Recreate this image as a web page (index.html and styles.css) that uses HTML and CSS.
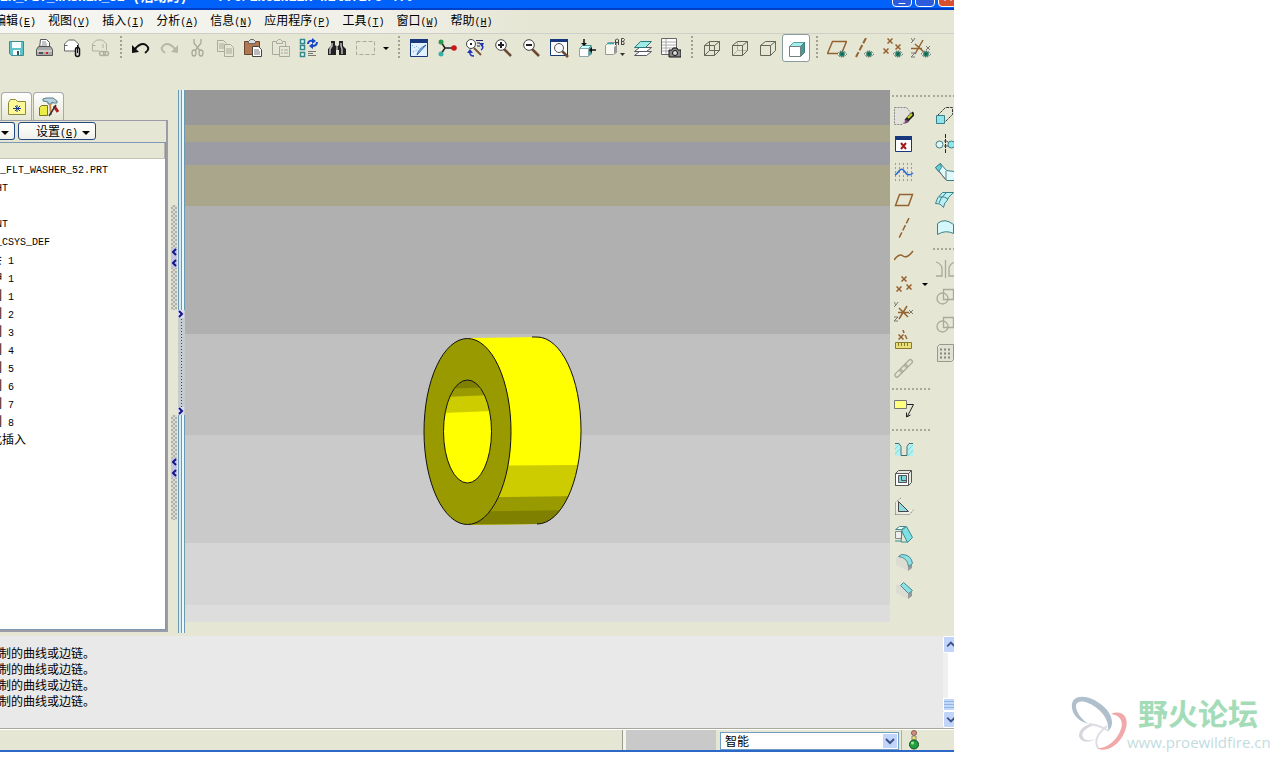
FILE: index.html
```
<!DOCTYPE html>
<html lang="zh-CN">

<head>
    <meta charset="UTF-8">
    <meta name="viewport" content="width=device-width, initial-scale=1.0">
    <title>Pro/ENGINEER Wildfire 4.0</title>
    <link rel="stylesheet" href="styles.css">
</head>

<body>
    <!-- Shapes used by more than one icon -->
    <svg class="defs" aria-hidden="true">
        <symbol id="eye" viewBox="0 0 10 8">
            <path d="M0 4Q5-2 10 4Q5 10 0 4z" fill="#dfe8dc" stroke="#444" stroke-width="1" stroke-dasharray="1 1" />
            <circle cx="5" cy="4" r="2.800" fill="#267a68" />
            <circle cx="5" cy="4" r="1" fill="#063" />
        </symbol>
        <symbol id="cross" viewBox="0 0 6 6">
            <path d="M.5.5l5 5M5.500.5l-5 5" stroke="#96602e" stroke-width="1.500" />
        </symbol>
        <symbol id="lens" viewBox="0 0 20 20">
            <path d="M11 11l7 7" stroke="#6b4a35" stroke-width="2.500" />
            <circle cx="8" cy="7" r="5.300" fill="#fff" stroke="#444" />
        </symbol>
    </svg>

    <div class="app">
        <div class="title-bar">
            <span class="title-text">ER_FLT_WASHER_52 (活动的)&nbsp; - Pro/ENGINEER Wildfire 4.0</span>
            <div class="window-buttons">
                <button class="win-btn" aria-label="最小化">_</button>
                <button class="win-btn" aria-label="最大化">▫</button>
                <button class="win-btn close" aria-label="关闭">×</button>
            </div>
        </div>

        <nav class="menu-bar">
            <button>编辑<span>(<u>E</u>)</span></button>
            <button>视图<span>(<u>V</u>)</span></button>
            <button>插入<span>(<u>I</u>)</span></button>
            <button>分析<span>(<u>A</u>)</span></button>
            <button>信息<span>(<u>N</u>)</span></button>
            <button>应用程序<span>(<u>P</u>)</span></button>
            <button>工具<span>(<u>T</u>)</span></button>
            <button>窗口<span>(<u>W</u>)</span></button>
            <button>帮助<span>(<u>H</u>)</span></button>
        </nav>

        <div class="toolbar">
            <button class="tool" aria-label="保存"><svg viewBox="0 0 20 20">
                    <path d="M3.500 3.500h14v14h-12l-2-2z" fill="#5cc4c8" stroke="#3d8c92" />
                    <path d="M6 4h9v6H6z" fill="#f4ffff" />
                    <path d="M7 12h7v5H7z" fill="#fff" />
                    <path d="M11 13h2v4h-2z" fill="#356" />
                </svg></button>
            <button class="tool" aria-label="打印"><svg viewBox="0 0 20 20">
                    <path d="M5.500 10l1-8.500h6l3 3V10" fill="#fff" stroke="#555" />
                    <path d="M8 4h4M8 6h5M7 8h6" stroke="#888" />
                    <path d="M2.500 11.500l2-3h12l2 3v6h-16z" fill="#aaa" stroke="#555" />
                    <path d="M3 13h15" stroke="#eee" />
                    <path d="M5 15h4" stroke="#555" stroke-width="2" />
                    <path d="M12 15h2" stroke="#c22" stroke-width="2" />
                </svg></button>
            <button class="tool" aria-label="发送"><svg viewBox="0 0 20 20">
                    <path d="M2.500 11V6l4-4h6l4 4v7h-14zM2.500 7.500h3" fill="#fff" stroke="#666" />
                    <rect x="13.500" y="9.500" width="4" height="9" rx="2" fill="#ddd" stroke="#111" stroke-width="1.500" />
                    <path d="M15.500 7v8" stroke="#111" />
                </svg></button>
            <button class="tool" aria-label="发送链接"><svg viewBox="0 0 20 20" fill="none" stroke="#b0b0a0">
                    <path d="M2.500 13V6l4-4h6l4 4v6M2.500 7.500h3M2.500 13h7M13 6v4" />
                    <rect x="9.500" y="13.500" width="6" height="4" rx="2" stroke-width="1.500" />
                    <rect x="13.500" y="13.500" width="5" height="4" rx="2" stroke-width="1.500" />
                </svg></button>
            <span class="sep"></span>
            <button class="tool" aria-label="撤消"><svg viewBox="0 0 20 20">
                    <path d="M1 7v8l7-1z" fill="#111" />
                    <path d="M4 11Q10 4 15 7Q20 11 14 15" fill="none" stroke="#111" stroke-width="2" />
                </svg></button>
            <button class="tool" aria-label="重做"><svg viewBox="0 0 20 20">
                    <path d="M19 7v8l-7-1z" fill="#b8b8a8" />
                    <path d="M16 11Q10 4 5 7Q0 11 6 15" fill="none" stroke="#b8b8a8" stroke-width="2" />
                </svg></button>
            <button class="tool" aria-label="剪切"><svg viewBox="0 0 20 20" fill="none" stroke="#aaaa9a" stroke-width="1.300">
                    <path d="M7 1v4l6 8M14 1v4l-6 8" />
                    <ellipse cx="7" cy="15" rx="2" ry="3" />
                    <ellipse cx="14" cy="15" rx="2" ry="3" />
                </svg></button>
            <button class="tool" aria-label="复制"><svg viewBox="0 0 20 20" fill="#e6e6d6" stroke="#aaaa9a">
                    <path d="M2.500 2.500h6l3 3v8h-9zM4 6h5M4 8h5M4 10h5" />
                    <path d="M9.500 6.500h6l3 3v9h-9zM11 11h6M11 13h6M11 15h6" />
                </svg></button>
            <button class="tool" aria-label="粘贴"><svg viewBox="0 0 20 20">
                    <path d="M1.500 3.500h15v13h-15z" fill="#b27650" stroke="#6a4630" />
                    <path d="M5.500 5.500v-2l2-2h3l2 2v2z" fill="#ddd" stroke="#666" />
                    <path d="M9.500 8.500h6l3 3v7h-9z" fill="#fff" stroke="#444" />
                    <path d="M11 12h5M11 14h6M11 16h6" stroke="#777" />
                </svg></button>
            <button class="tool" aria-label="选择性粘贴"><svg viewBox="0 0 20 20" fill="#e6e6d6" stroke="#aaaa9a">
                    <path d="M1.500 3.500h13v13h-13z" />
                    <path d="M5.500 5.500v-2l2-2h2l2 2v2z" />
                    <path d="M8.500 8.500h10v10h-10zM10 12h2M10 15h2M13 12h4M13 15h4" />
                </svg></button>
            <button class="tool" aria-label="再生"><svg viewBox="0 0 20 20">
                    <path d="M1.500 1.500h4v4h-4zM1.500 7.500h4v4h-4zM1.500 14.500h4v4h-4z" fill="#eaffff" stroke="#33868a" stroke-width="1.500" />
                    <path d="M9 6q0-4 5-3M18 4q0 4-5 4" fill="none" stroke="#1746c8" stroke-width="2" />
                    <path d="M13 0l4 3-4 3zM14 5l-4 3 4 3z" fill="#1746c8" />
                    <path d="M9 13.500h8M9 15.500h5M9 17.500h8" stroke="#777" />
                </svg></button>
            <button class="tool" aria-label="查找"><svg viewBox="0 0 20 20">
                    <path d="M4 3h4v4l2 2 2-2V3h4v5l3 3v6h-7v-5H9v5H1v-6l3-3z" fill="#222" />
                    <path d="M5 5v3l-2 3v5M14 5v3l1 3v5M10 9v3" fill="none" stroke="#bbb" stroke-width="1.500" />
                </svg></button>
            <button class="tool" aria-label="选取框"><svg viewBox="0 0 20 20">
                    <path d="M1.500 3.500h18v13h-18z" fill="none" stroke="#aaaa9a" stroke-dasharray="4 2" />
                </svg></button>
            <button class="drop" aria-label="选取选项"></button>
            <span class="sep"></span>
            <button class="tool" aria-label="重画"><svg viewBox="0 0 20 20">
                    <path d="M1.500 1.500h17v17h-17z" fill="#e2f0ff" stroke="#17387c" />
                    <path d="M1 1h18v4H1z" fill="#17387c" />
                    <path d="M3 7l3 3M4 14l4-2M7 8l4 3" stroke="#5a9ad8" stroke-dasharray="1 2" />
                    <path d="M17 7L8 17q1-6 9-10" fill="#a6c8ec" stroke="#2a6aa8" />
                </svg></button>
            <button class="tool" aria-label="旋转中心"><svg viewBox="0 0 20 20">
                    <path d="M4 4l4 6M8 10l-4 6M8 10h9" stroke="#222" stroke-width="1.500" />
                    <circle cx="4" cy="4" r="2.500" fill="#2a9a4c" />
                    <circle cx="4" cy="16" r="2.500" fill="#35b0a8" />
                    <circle cx="17" cy="10" r="2.800" fill="#c81818" />
                </svg></button>
            <button class="tool" aria-label="定向模式"><svg viewBox="0 0 20 20">
                    <path d="M9 10l7 7" stroke="#7a5238" stroke-width="2" />
                    <circle cx="6" cy="6" r="4.500" fill="#fff" stroke="#444" />
                    <path d="M6 5v2" stroke="#222" stroke-width="2" />
                    <path d="M11 2.500h7M12 5h3M12 8h3" stroke="#226" />
                    <path d="M17 7q2 3-1 5M5 13q-1 5 4 5" fill="none" stroke="#2235b8" stroke-width="1.500" />
                    <path d="M2 15l3-4 3 4zM14 5h5l-2 4z" fill="#2235b8" />
                </svg></button>
            <button class="tool" aria-label="放大"><svg viewBox="0 0 20 20">
                    <use href="#lens" />
                    <path d="M5 7h6M8 4v6" stroke="#222" stroke-width="2" />
                </svg></button>
            <button class="tool" aria-label="缩小"><svg viewBox="0 0 20 20">
                    <use href="#lens" />
                    <path d="M5 7h6" stroke="#222" stroke-width="2" />
                </svg></button>
            <button class="tool" aria-label="重新调整"><svg viewBox="0 0 20 20">
                    <path d="M1.500 1.500h17v16h-17z" fill="#fff" stroke="#17387c" />
                    <path d="M1 1h18v3H1z" fill="#17387c" />
                    <path d="M13 13l6 6" stroke="#6b4a35" stroke-width="2.500" />
                    <circle cx="10" cy="10" r="4.500" fill="#f8f8f8" stroke="#555" />
                </svg></button>
            <button class="tool" aria-label="重定向"><svg viewBox="0 0 20 20">
                    <path d="M2.500 10.500l3-3h9l-3 3z" fill="#cff" stroke="#4a9a9a" />
                    <path d="M2.500 10.500h9v8h-9z" fill="#fff" stroke="#8aa" />
                    <path d="M12 10l3-2v8l-3 2z" fill="#48a0a0" />
                    <path d="M7 1v6M19 12h-6" stroke="#111" stroke-width="1.500" />
                    <path d="M4 5h6l-3 3zM15 9v6l-3-3z" fill="#111" />
                </svg></button>
            <button class="tool" aria-label="已命名视图"><svg viewBox="0 0 20 20">
                    <path d="M.5 7.500l3-3h8v10l-3 2h-8z" fill="#f8f8f0" stroke="#999" />
                    <path d="M2 5.500h7" stroke="#3aa" stroke-width="1.500" />
                    <path d="M9 9l3-2v7l-3 2z" fill="#999" />
                    <path d="M10.500 7V2l1-1h1l1 1v5M10.500 4.500h3M16.500 7V.5h2l1 1-1 2h-2M18 3.500l1 1v2h-3" fill="none" stroke="#444" />
                    <path d="M15 15h5l-2.500 3z" fill="#333" />
                </svg></button>
            <button class="tool" aria-label="层"><svg viewBox="0 0 20 20" stroke="#556">
                    <path d="M1.500 17.500l5-4h12l-5 4z" fill="#fff" />
                    <path d="M1.500 13.500l5-4h12l-5 4z" fill="#fff" />
                    <path d="M1.500 9.500l6-6h11l-6 6z" fill="#9eeae6" stroke="#2a7a7a" />
                </svg></button>
            <button class="tool" aria-label="视图管理器"><svg viewBox="0 0 20 20">
                    <path d="M.5.5h15v16H.5z" fill="#fff" stroke="#666" />
                    <path d="M1 4h14M1 7h14M1 10h14M1 13h8M5 1v15" stroke="#aaa" />
                    <path d="M8 12h3l1-2h4l1 2h3v7H8z" fill="#888" stroke="#111" />
                    <circle cx="14" cy="15" r="2.500" fill="#ddd" stroke="#111" />
                </svg></button>
            <span class="sep"></span>
            <button class="tool" aria-label="线框"><svg viewBox="0 0 20 20" fill="none" stroke="#666658">
                    <path d="M2.500 7.500h10v10h-10zM7.500 3.500h10v9h-10zM2.500 7.500l5-4M12.500 7.500l5-4M12.500 17.500l5-5M2.500 17.500l5-5" />
                </svg></button>
            <button class="tool" aria-label="隐藏线"><svg viewBox="0 0 20 20" fill="none" stroke="#666658">
                    <path d="M7.500 4v8.500h10M2.500 17.500l5-5" stroke="#b4b4a6" />
                    <path d="M2.500 7.500h10v10h-10zM2.500 7.500l5-4h10v9l-5 5M12.500 7.500l5-4" />
                </svg></button>
            <button class="tool" aria-label="消隐"><svg viewBox="0 0 20 20" fill="none" stroke="#666658">
                    <path d="M2.500 7.500h10v10h-10zM2.500 7.500l5-4h10v9l-5 5M12.500 7.500l5-4" />
                </svg></button>
            <button class="tool active" aria-label="着色"><svg viewBox="0 0 20 20">
                    <path d="M3.500 8.500l4-4h11l-4 4z" fill="#a5efeb" stroke="#55a09e" />
                    <path d="M14.500 8.500l4-4v10l-4 4z" fill="#499995" stroke="#417e7c" />
                    <path d="M3.500 8.500h11v10h-11z" fill="#fff" stroke="#718080" />
                </svg></button>
            <span class="sep"></span>
            <button class="tool" aria-label="基准平面开/关"><svg viewBox="0 0 20 20">
                    <path d="M5.500 3.500h14l-5 12H.5z" fill="none" stroke="#936431" stroke-width="1.500" />
                    <use href="#eye" x="10" y="12" width="10" height="8" />
                </svg></button>
            <button class="tool" aria-label="基准轴开/关"><svg viewBox="0 0 20 20">
                    <path d="M11 0L1 19" stroke="#936431" stroke-width="2" stroke-dasharray="6 2" />
                    <use href="#eye" x="9" y="12" width="10" height="8" />
                </svg></button>
            <button class="tool" aria-label="基准点开/关"><svg viewBox="0 0 20 20">
                    <use href="#cross" x="4" y="0" width="6" height="6" />
                    <use href="#cross" x="12" y="6" width="6" height="6" />
                    <use href="#cross" x="0" y="10" width="6" height="6" />
                    <use href="#eye" x="10" y="12" width="10" height="8" />
                </svg></button>
            <button class="tool" aria-label="坐标系开/关"><svg viewBox="0 0 20 20">
                    <path d="M0 10.500h11M4 6l10 9M12 2L4 16" stroke="#936431" stroke-width="1.500" />
                    <path d="M0 0l2 3 2-3M2 3L0 5M0 15h4l-4 4h4M15 8l4 4M19 8l-4 4" fill="none" stroke="#777" />
                    <use href="#eye" x="10" y="12" width="10" height="8" />
                </svg></button>
        </div>

        <div class="workspace">
            <aside class="navigator">
                <div class="tabs">
                    <button class="tab" aria-label="文件夹浏览器"><svg viewBox="0 0 20 20">
                            <path d="M1.500 5.500l2-3h5l2 2h8v13h-17z" fill="#fdf998" stroke="#8a8a3a" />
                            <path d="M10 8v7M6 11.500h8M8 9l5 5M13 9l-5 5" stroke="#1e3a8a" />
                        </svg></button>
                    <button class="tab" aria-label="收藏夹"><svg viewBox="0 0 20 20">
                            <path d="M.5 10.500l2-2h6v10h-8z" fill="#ecec48" stroke="#777720" />
                            <path d="M4 2l3-1h7l4 3v2h-3l-2-1v2H9V5L4 4z" fill="#b8d4e0" stroke="#5a7a8a" />
                            <path d="M11 7l1 11" stroke="#d08a50" stroke-width="2" />
                            <path d="M15 9l4 6" stroke="#b02020" stroke-width="3" />
                            <path d="M17 8l-7 11" stroke="#333" stroke-width="1.500" />
                        </svg></button>
                </div>
                <div class="panel">
                    <div class="panel-buttons">
                        <button class="panel-btn show" aria-label="显示"><i class="caret"></i></button>
                        <button class="panel-btn settings">设置<span>(<u>G</u>)</span><i class="caret"></i></button>
                    </div>
                    <div class="tree-frame">
                        <div class="tree-head"></div>
                        <ul class="tree">
                            <li class="root">R_FLT_WASHER_52.PRT</li>
                            <li>RIGHT</li>
                            <li>TOP</li>
                            <li>FRONT</li>
                            <li>PRT_CSYS_DEF</li>
                            <li><b>组会</b> 1</li>
                            <li><b>拉伸</b> 1</li>
                            <li><b>阵列</b> 1</li>
                            <li><b>阵列</b> 2</li>
                            <li><b>阵列</b> 3</li>
                            <li><b>阵列</b> 4</li>
                            <li><b>阵列</b> 5</li>
                            <li><b>阵列</b> 6</li>
                            <li><b>阵列</b> 7</li>
                            <li><b>阵列</b> 8</li>
                            <li><b>在此插入</b></li>
                        </ul>
                    </div>
                </div>
            </aside>

            <div class="gutter">
                <div class="grip"><svg viewBox="0 0 6 20"><path d="M5 1L2 4l3 3M5 12l-3 3 3 3" /></svg></div>
                <div class="grip"><svg viewBox="0 0 6 20"><path d="M5 1L2 4l3 3M5 12l-3 3 3 3" /></svg></div>
            </div>
            <div class="splitter">
                <div class="splitter-grip">
                    <svg viewBox="0 0 6 8"><path d="M1 1l3 3-3 3" /></svg>
                    <svg viewBox="0 0 6 8"><path d="M1 1l3 3-3 3" /></svg>
                </div>
            </div>

            <main class="viewport">
                <!-- Washer model -->
                <svg class="model" viewBox="0 0 160 190" role="img" aria-label="垫圈">
                    <defs>
                        <clipPath id="outer">
                            <path d="M45 2L114 1C138 1 158 42 158 94.500S138 188 114 188L45 188.500z" />
                        </clipPath>
                        <clipPath id="hole">
                            <ellipse cx="44.500" cy="95.500" rx="24" ry="51.500" />
                        </clipPath>
                    </defs>
                    <g clip-path="url(#outer)">
                        <path d="M0 0h160v190H0z" fill="#ff0" />
                        <path d="M0 130l160-1v61H0z" fill="#cc0" />
                        <path d="M0 162l160-2v30H0z" fill="#990" />
                        <path d="M0 176l160-2v16H0z" fill="#808000" />
                    </g>
                    <path d="M109 1h5C138 1 158 42 158 94.500S138 188 114 188" fill="none" stroke="#111" />
                    <ellipse cx="44.500" cy="95.500" rx="43.500" ry="93" fill="#990" stroke="#111" />
                    <g clip-path="url(#hole)">
                        <path d="M20 43h50v105H20z" fill="#ff0" />
                        <path d="M20 43h50v32l-50 2z" fill="#cc0" />
                        <path d="M20 43h50v16l-50 2z" fill="#990" />
                        <path d="M20 43h50v8l-50 2z" fill="#808000" />
                    </g>
                    <ellipse cx="44.500" cy="95.500" rx="24" ry="51.500" fill="none" stroke="#111" />
                </svg>
            </main>

            <div class="side-tools">
                <div class="side-col">
                    <span class="side-head"></span>
                    <button class="tool" aria-label="草绘"><svg viewBox="0 0 20 20">
                            <path d="M.5 1.500h12l4 5-8 12h-8z" fill="#e2e2da" stroke="#888" stroke-dasharray="2 1" />
                            <path d="M20 7l-8 8" stroke="#222" stroke-width="4" />
                            <path d="M18 8l-4 4" stroke="#c8d820" stroke-width="2" />
                            <path d="M10 18l2-5 3 3z" fill="#747" />
                        </svg></button>
                    <button class="tool" aria-label="关闭草绘"><svg viewBox="0 0 20 20">
                            <path d="M1.500 2.500h16v15h-16z" fill="#fff" stroke="#17387c" />
                            <path d="M1 2h17v4H1z" fill="#17387c" />
                            <path d="M7 9l5 6M12 9l-5 6" stroke="#a02020" stroke-width="2" />
                        </svg></button>
                    <button class="tool" aria-label="草绘曲线"><svg viewBox="0 0 20 20">
                            <path d="M1 2h18M1 6h18M1 10h18M1 14h18M1 18h18" stroke="#555" stroke-dasharray="1 3" />
                            <path d="M1 13q2-1 4-4 3-4 6 1 3 5 8 1" fill="none" stroke="#2a6ad0" stroke-width="1.500" />
                        </svg></button>
                    <button class="tool" aria-label="基准平面"><svg viewBox="0 0 20 20">
                            <path d="M5.500 4.500h13l-4 11H1.500z" fill="none" stroke="#936431" stroke-width="1.500" />
                        </svg></button>
                    <button class="tool" aria-label="基准轴"><svg viewBox="0 0 20 20">
                            <path d="M15 0L5 20" stroke="#936431" stroke-width="1.500" stroke-dasharray="6 2" />
                        </svg></button>
                    <button class="tool" aria-label="基准曲线"><svg viewBox="0 0 20 20">
                            <path d="M0 14q5-7 9-4t10-5" fill="none" stroke="#936431" stroke-width="1.500" />
                        </svg></button>
                    <div class="tool-row">
                        <button class="tool" aria-label="基准点"><svg viewBox="0 0 20 20">
                                <use href="#cross" x="7" y="2" width="6" height="6" />
                                <use href="#cross" x="12" y="10" width="6" height="6" />
                                <use href="#cross" x="2" y="12" width="6" height="6" />
                            </svg></button>
                        <button class="drop" aria-label="基准点选项"></button>
                    </div>
                    <button class="tool" aria-label="坐标系"><svg viewBox="0 0 20 20">
                            <path d="M4 10.500h11M5 6l9 9M13 4L5 17" stroke="#936431" stroke-width="1.500" />
                            <path d="M0 0l2 3 2-3M2 3L0 5M0 15h4l-4 4h4M15 8l4 4M19 8l-4 4" fill="none" stroke="#777" />
                        </svg></button>
                    <button class="tool" aria-label="分析"><svg viewBox="0 0 20 20">
                            <use href="#cross" x="4" y="4" width="6" height="6" />
                            <path d="M9 0l1 3M11 5l2 4" stroke="#936431" stroke-width="1.500" />
                            <path d="M1.500 12.500h16v6h-16z" fill="#e8e07a" stroke="#8a7a2a" />
                            <path d="M4.500 13v3M7.500 13v3M10.500 13v3M13.500 13v3" stroke="#8a7a2a" />
                        </svg></button>
                    <button class="tool" aria-label="参照"><svg viewBox="0 0 20 20" fill="none" stroke="#aaaa9a" stroke-width="1.300">
                            <g transform="rotate(-45 10 10)">
                                <rect x="-2" y="8" width="9" height="4" rx="2" />
                                <rect x="5" y="8" width="9" height="4" rx="2" />
                                <rect x="12" y="8" width="9" height="4" rx="2" />
                            </g>
                        </svg></button>
                    <span class="side-sep"></span>
                    <button class="tool" aria-label="注释"><svg viewBox="0 0 20 20">
                            <path d="M.5 1.500h12v8H.5z" fill="#ffff80" stroke="#777" />
                            <path d="M13 5.500h6.500L13 18M12.500 13.500V18l4-2" fill="none" stroke="#222" />
                        </svg></button>
                    <span class="side-sep"></span>
                    <button class="tool" aria-label="孔"><svg viewBox="0 0 20 20">
                            <path d="M1 4h4l2 3v9H1zM19 4h-4l-2 3v9h6z" fill="#b4f0f0" />
                            <path d="M1 9l4-4M1 14l5-5M14 16l5-6M14 10l5-5" stroke="#7dd" />
                            <path d="M1 3.500h4l2 3v9h6v-9l2-3h4" fill="none" stroke="#4a6a70" />
                        </svg></button>
                    <button class="tool" aria-label="壳"><svg viewBox="0 0 20 20" stroke="#555">
                            <path d="M1.500 5.500l3-3h13v12l-3 3h-13z" fill="#e8e8e0" />
                            <path d="M1.500 5.500h13v12h-13zM14.500 5.500l3-3" fill="#fff" />
                            <path d="M4.500 7.500h8v7h-8z" fill="#7ed4dc" />
                            <path d="M7.500 8v4.500h5" fill="none" />
                        </svg></button>
                    <button class="tool" aria-label="筋"><svg viewBox="0 0 20 20">
                            <path d="M1.500 18.500h14l4-5M1.500 18.500v-12l6-5" fill="#f0f0e8" stroke="#666" stroke-dasharray="1 1" />
                            <path d="M4.500 5.500v10h10z" fill="#8edce2" stroke="#444" />
                        </svg></button>
                    <button class="tool" aria-label="拔模"><svg viewBox="0 0 20 20" stroke="#3a8a90">
                            <path d="M1.500 5.500l4-3h6l-4 3z" fill="#fff" />
                            <path d="M1.500 7.500h6v7h-6z" fill="#eee" stroke="#888" />
                            <path d="M7.500 6.500l5-4 6 11-5 5z" fill="#7ce0e4" />
                            <path d="M8 7l-1 11h6M1 17h6" fill="none" />
                        </svg></button>
                    <button class="tool" aria-label="倒圆角"><svg viewBox="0 0 20 20">
                            <path d="M2 5q10-1 12 10v4L2 13z" fill="#dcdcd2" />
                            <path d="M14 14l4-3v5l-4 3z" fill="#999" />
                            <path d="M4.500 4.500l3-2q10 0 11 9l-4 3q-1-9-10-10z" fill="#8de0e4" stroke="#4a8a90" />
                        </svg></button>
                    <button class="tool" aria-label="倒角"><svg viewBox="0 0 20 20">
                            <path d="M2 5h4l8 9v5L2 13z" fill="#dcdcd2" />
                            <path d="M14 14l4-3v5l-4 3z" fill="#999" />
                            <path d="M6.500 5.500l3-3 9 8-4 3z" fill="#8de0e4" stroke="#4a8a90" />
                        </svg></button>
                </div>

                <div class="side-col second">
                    <span class="side-head"></span>
                    <button class="tool" aria-label="拉伸"><svg viewBox="0 0 20 20">
                            <path d="M2.500 9.500l8-8h7v7l-8 8" fill="none" stroke="#333" stroke-dasharray="3 1" />
                            <path d="M1.500 9.500h8v8h-8z" fill="#90e4ec" stroke="#3a8088" />
                        </svg></button>
                    <button class="tool" aria-label="旋转"><svg viewBox="0 0 20 20">
                            <path d="M10.500 0v20" stroke="#222" stroke-dasharray="4 1" />
                            <circle cx="4.500" cy="10.500" r="3.500" fill="#e6f4f0" stroke="#3a8088" />
                            <path d="M9 7q6 0 5 4M9 12h6" fill="none" stroke="#555" />
                            <circle cx="16.500" cy="10.500" r="3.500" fill="#90e4ec" stroke="#3a8088" />
                        </svg></button>
                    <button class="tool" aria-label="可变截面扫描"><svg viewBox="0 0 20 20">
                            <path d="M.5 5.500l5-4 6 7 8 1v9h-8z" fill="#dffafa" stroke="#3a8088" />
                            <path d="M.5 5.500l5-4 1 4-3 4z" fill="#66d0d8" stroke="#3a8088" />
                            <path d="M4 9l7 9V9" fill="none" stroke="#777" />
                        </svg></button>
                    <button class="tool" aria-label="边界混合"><svg viewBox="0 0 20 20" fill="#b8f0f4" stroke="#3a8088">
                            <path d="M.5 13.500q1-6 7-11h11q-6 5-7 9-2 0-3 6-3-5-8-4z" />
                            <path d="M4 7q6-1 9 2M11 3q-6 5-7 10" fill="none" />
                        </svg></button>
                    <button class="tool" aria-label="造型"><svg viewBox="0 0 20 20">
                            <path d="M2.500 5.500q7-6 16 1v9q-8-4-16 1z" fill="#d6f8fa" stroke="#3a8088" />
                        </svg></button>
                    <span class="side-sep"></span>
                    <button class="tool" aria-label="镜像"><svg viewBox="0 0 20 20" fill="none" stroke="#aaaa9a" stroke-width="1.300">
                            <path d="M10.500 1v18M1 3q6 2 6 7v7H1M20 3q-6 2-6 7v7h6" />
                        </svg></button>
                    <button class="tool" aria-label="合并"><svg viewBox="0 0 20 20" fill="none" stroke="#aaaa9a" stroke-width="1.300">
                            <circle cx="7.500" cy="11.500" r="5.500" />
                            <path d="M8.500 2.500h10v10h-10z" />
                        </svg></button>
                    <button class="tool" aria-label="修剪"><svg viewBox="0 0 20 20" fill="none" stroke="#aaaa9a" stroke-width="1.300">
                            <circle cx="7.500" cy="11.500" r="5.500" />
                            <path d="M8.500 2.500h10v10h-10z" />
                        </svg></button>
                    <button class="tool" aria-label="阵列"><svg viewBox="0 0 20 20">
                            <path d="M2.500 3.500l2-2h14v15l-2 2h-14z" fill="#e0e0d4" stroke="#999988" />
                            <path d="M5 6.500h11M5 10.500h11M5 14.500h11" stroke="#888878" stroke-width="2" stroke-dasharray="2 2" />
                        </svg></button>
                </div>
            </div>
        </div>

        <div class="messages">
            <div class="message-list">
                <p>制的曲线或边链。</p>
                <p>制的曲线或边链。</p>
                <p>制的曲线或边链。</p>
                <p>制的曲线或边链。</p>
            </div>
            <div class="scrollbar">
                <button class="scroll-btn" aria-label="向上滚动"><svg viewBox="0 0 12 16"><path d="M3 10l4-4 4 4" /></svg></button>
                <div class="scroll-track"><div class="thumb"></div></div>
                <button class="scroll-btn" aria-label="向下滚动"><svg viewBox="0 0 12 16"><path d="M3 6l4 4 4-4" /></svg></button>
            </div>
        </div>

        <footer class="status-bar">
            <div class="status-cell"></div>
            <div class="filter">
                <select aria-label="选取过滤器">
                    <option>智能</option>
                </select>
            </div>
            <div class="status-light">
                <svg viewBox="0 0 12 20">
                    <circle cx="6" cy="3" r="2.500" fill="#d09080" stroke="#8a5a50" />
                    <path d="M4 6h4v4H4z" fill="#f0e860" stroke="#888" />
                    <circle cx="6" cy="14.500" r="4.500" fill="#22a040" stroke="#114a20" />
                    <circle cx="4.500" cy="13" r="1.500" fill="#98e8a0" />
                </svg>
            </div>
        </footer>
    </div>

    <div class="brand">
        <svg class="brand-logo" viewBox="0 0 58 56" fill="none">
            <path fill="#afbfcc" fill-rule="evenodd" d="M1 12C-1-2 17-3 32 10c11 9 11 21 5 25 1-7-2-15-9-21C15 3 5 4 5 10c0 7 7 15 13 18C9 26 2 20 1 12z" />
            <path fill="#f0a8a8" fill-rule="evenodd" d="M40 18c11-5 18 3 15 14-4 16-20 26-29 20 9 1 20-7 24-19 3-10-3-14-10-15z" />
            <path fill="#d5d5dc" fill-rule="evenodd" d="M27 29c-9 0-18 7-15 12 1 4 7 4 12 2-8 5-16 2-16-4 1-8 11-13 19-10z" />
            <path stroke="#dedee4" stroke-width="2" d="M27 52c-4-7 0-15 9-22M18 28q10 1 20 7" />
        </svg>
        <div class="brand-text">
            <strong>野火论坛</strong>
            <span>www.proewildfire.cn</span>
        </div>
    </div>
</body>

</html>
```
FILE: styles.css
```
* {
    box-sizing: border-box;
}

body {
    display: flex;
    height: 100vh;
    margin: 0;
    padding-bottom: 8px;
    overflow: hidden;
    background-color: #fff;
    color: #000;
    font-family: "Noto Sans CJK SC", sans-serif;
    font-size: 12px;
}

button {
    margin: 0;
    padding: 0;
    border: none;
    background: none;
    color: inherit;
    font: inherit;
}

.defs {
    position: absolute;
    width: 0;
    height: 0;
}

.app {
    flex: 1;
    min-width: 0;
    display: flex;
    flex-direction: column;
    overflow: hidden;
    background-color: #e6e6d5;
    border-bottom: 2px solid #2c68c8;
}

/* Title bar */
.title-bar {
    flex: none;
    display: flex;
    justify-content: space-between;
    align-items: flex-end;
    height: 10px;
    overflow: hidden;
    background-color: #0062fb;
    border-bottom: 2px solid #0040c8;
}

.title-text {
    padding-bottom: 2px;
    color: #fff;
    font-family: "Liberation Mono", "Noto Sans CJK SC", monospace;
    font-size: 13px;
    font-weight: bold;
    line-height: 16px;
    white-space: nowrap;
}

.window-buttons {
    display: flex;
    gap: 3px;
    margin-right: -4px;
}

.win-btn {
    width: 20px;
    height: 20px;
    margin-bottom: 1px;
    border: 1px solid #fff;
    border-radius: 4px;
    background-color: #2c5cdc;
    color: #fff;
    font-weight: bold;
    line-height: 18px;
}

.win-btn.close {
    background-color: #d8502c;
}

/* Menu */
.menu-bar {
    flex: none;
    display: flex;
    gap: 12px;
    height: 24px;
    margin-left: -6px;
    padding-bottom: 5px;
    border-bottom: 1px solid #cfcfc8;
    background: linear-gradient(to right, #f6f6f3, #f0f0e8 40%, #e6e6d5 56%);
    white-space: nowrap;
}

.menu-bar span,
.settings span {
    font-family: "Liberation Mono", monospace;
    font-size: 10px;
}

/* Toolbars */
.toolbar {
    flex: none;
    display: flex;
    height: 56px;
    padding-left: 2px;
}

.tool {
    flex: none;
    display: flex;
    align-items: center;
    justify-content: center;
    width: 28px;
    height: 28px;
}

.tool svg,
.tab svg {
    width: 20px;
    height: 20px;
}

.tool.active {
    border: 1px solid #8a9a9a;
    border-radius: 3px;
    background-color: #fff;
}

.sep {
    width: 13px;
    height: 26px;
    background: repeating-linear-gradient(#a0a094 0 2px, transparent 2px 4px) center 2px / 2px 100% no-repeat;
}

.drop {
    display: flex;
    align-items: center;
    justify-content: center;
    width: 13px;
    height: 28px;
}

.drop::before,
.caret {
    content: "";
    border: 3px solid transparent;
    border-top-color: #000;
    border-bottom: none;
}

/* Work area */
.workspace {
    flex: 1;
    min-height: 0;
    display: flex;
}

.navigator {
    flex: none;
    display: flex;
    flex-direction: column;
    width: 168px;
    padding: 2px 0 4px;
    overflow: hidden;
}

.tabs {
    display: flex;
    gap: 1px;
    padding-left: 1px;
}

.tab {
    display: flex;
    align-items: center;
    justify-content: center;
    width: 31px;
    height: 28px;
    border: 1px solid #a8a8b0;
    border-bottom: none;
    border-radius: 4px 4px 0 0;
    background: linear-gradient(#fff, #e6e6d5);
}

.panel {
    flex: 1;
    display: flex;
    flex-direction: column;
    border: 1px solid #9c9ca8;
    border-width: 1px 2px 2px 0;
}

.panel-buttons {
    display: flex;
    gap: 3px;
    padding: 1px 0 2px;
}

.panel-btn {
    height: 18px;
    border: 1px solid #234a80;
    border-radius: 3px;
    background: linear-gradient(#fff, #f0f0ea);
    line-height: 16px;
    text-align: left;
    white-space: nowrap;
}

.panel-btn.show {
    width: 15px;
    padding-left: 1px;
    border-left: none;
    border-radius: 0 3px 3px 0;
}

.settings {
    width: 78px;
    padding-left: 17px;
}

.caret {
    display: inline-block;
    border-width: 4px;
    border-bottom: none;
    vertical-align: middle;
}

.settings .caret {
    margin-left: 4px;
}

.tree-frame {
    flex: 1;
    border: 1px solid #7c98b4;
    border-left: none;
    background-color: #fff;
}

.tree-head {
    height: 16px;
    border-right: 1px solid #b8b8b0;
    border-bottom: 1px solid #c4c4b8;
    background-color: #e6e6d5;
}

.tree {
    margin: 3px 0 0 -22px;
    padding: 0;
    list-style: none;
    font-family: "Liberation Mono", "Noto Sans CJK SC", monospace;
    font-size: 10px;
    line-height: 18px;
    white-space: nowrap;
}

.tree li {
    height: 18px;
}

.tree .root {
    padding-left: 16px;
}

.tree b {
    font-size: 12px;
    font-weight: normal;
}

.gutter {
    flex: none;
    display: flex;
    flex-direction: column;
    gap: 105px;
    width: 10px;
    padding: 115px 1px 0 3px;
}

.grip {
    display: flex;
    align-items: center;
    height: 105px;
    background: repeating-conic-gradient(#b0b0a6 0 25%, #dcdcd2 0 50%) 0 0 / 4px 4px;
}

.grip svg,
.splitter-grip svg {
    display: block;
    width: 6px;
    fill: none;
    stroke: #14148c;
    stroke-width: 2;
}

.grip svg {
    height: 20px;
    background-color: #c4c4e0;
}

.splitter {
    flex: none;
    width: 7px;
    margin-bottom: 3px;
    padding-top: 220px;
    background: linear-gradient(to right, #6a9ab4 0 1px, #d4ecf6 1px 3px, #6a9ab4 3px 4px, #f0f8f8 4px 6px, #6a9ab4 6px);
}

.splitter-grip {
    display: flex;
    flex-direction: column;
    justify-content: space-between;
    height: 105px;
    background: repeating-linear-gradient(#444 0 1px, transparent 1px 3px) center / 1px 100% no-repeat, #c4ccd0;
}

.splitter-grip svg {
    height: 8px;
    background-color: #dcdcf0;
}

.viewport {
    flex: 1;
    min-width: 0;
    margin-bottom: 14px;
    padding: 246px 0 0 238px;
    overflow: hidden;
    background: linear-gradient(#989898 35px, #aaa68c 35px 52px, #9c9ca4 52px 75px, #aaa68c 75px 116px,
            #b0b0b0 116px 244px, #c0c0c0 244px 345px, #cacaca 345px 453px, #d6d6d6 453px 515px, #dddddd 515px);
}

.model {
    display: block;
    width: 160px;
    height: 190px;
}

.side-tools {
    flex: none;
    display: flex;
    width: 64px;
    overflow: hidden;
}

.side-col {
    flex: none;
    display: flex;
    flex-direction: column;
    width: 41px;
}

.side-head,
.side-sep {
    height: 12px;
    margin-left: 2px;
    background: repeating-linear-gradient(to right, #a8a89c 0 2px, transparent 2px 4px) left center / 38px 2px no-repeat;
}

.side-sep {
    height: 13px;
}

.tool-row {
    display: flex;
}

/* Messages */
.messages {
    flex: none;
    display: flex;
    justify-content: space-between;
    height: 93px;
    background-color: #e9e9e9;
    border-bottom: 1px solid #a8a89c;
}

.message-list {
    padding-top: 9px;
}

.message-list p {
    margin: 0 0 0 -1px;
    line-height: 16px;
}

.scrollbar {
    display: flex;
    flex-direction: column;
    width: 11px;
    overflow: hidden;
}

.scroll-btn {
    flex: none;
    width: 18px;
    height: 17px;
    border: 1px solid #fff;
    border-radius: 2px;
    background-color: #c2d4fa;
    text-align: left;
}

.scroll-btn svg {
    display: block;
    width: 12px;
    height: 15px;
    fill: none;
    stroke: #3c5488;
    stroke-width: 2;
}

.scroll-track {
    flex: 1;
    display: flex;
    align-items: flex-end;
    background: linear-gradient(to right, #f0f0ee 5px, #fff 5px);
}

.thumb {
    flex: none;
    width: 18px;
    height: 13px;
    border: 1px solid #fff;
    background: repeating-linear-gradient(#c2d8fa 0 2px, #94b4e4 2px 3px);
}

/* Status bar */
.status-bar {
    flex: none;
    display: flex;
    justify-content: flex-end;
    height: 21px;
    border-top: 1px solid #fff;
}

.status-cell {
    width: 94px;
    border-left: 1px solid #9a9a8e;
    background: linear-gradient(to right, #f4f4ec 3px, #c9c9c9 3px);
}

.filter {
    position: relative;
    margin: 2px 2px 0 4px;
}

.filter::after {
    content: "";
    position: absolute;
    top: 2px;
    right: 2px;
    width: 14px;
    height: 14px;
    background: url("data:image/svg+xml,%3Csvg xmlns='http://www.w3.org/2000/svg' viewBox='0 0 14 14'%3E%3Cpath d='M3 5l4 4 4-4' fill='none' stroke='%233c5488' stroke-width='2'/%3E%3C/svg%3E") #c2d4fa;
    pointer-events: none;
}

.filter select {
    display: block;
    width: 179px;
    height: 18px;
    padding: 0 4px;
    border: 1px solid #6f9cc0;
    border-radius: 0;
    background-color: #fff;
    color: #000;
    font: inherit;
    line-height: 16px;
    appearance: none;
}

.status-light {
    width: 53px;
    padding-left: 6px;
    border-left: 1px solid #b0b0a4;
}

.status-light svg {
    display: block;
    width: 12px;
    height: 20px;
}

/* Forum logo in the corner */
.brand {
    flex: none;
    display: flex;
    align-items: flex-end;
    width: 326px;
    padding-left: 117px;
}

.brand-logo {
    flex: none;
    width: 58px;
    height: 56px;
}

.brand-text {
    display: flex;
    flex-direction: column;
    margin-left: -2px;
}

.brand-text strong {
    margin-left: 11px;
    color: #a4dcb8;
    font-size: 30px;
    line-height: 40px;
}

.brand-text span {
    color: #c2dcde;
    font-family: "Open Sans", sans-serif;
    font-size: 15px;
    line-height: 20px;
}
```
